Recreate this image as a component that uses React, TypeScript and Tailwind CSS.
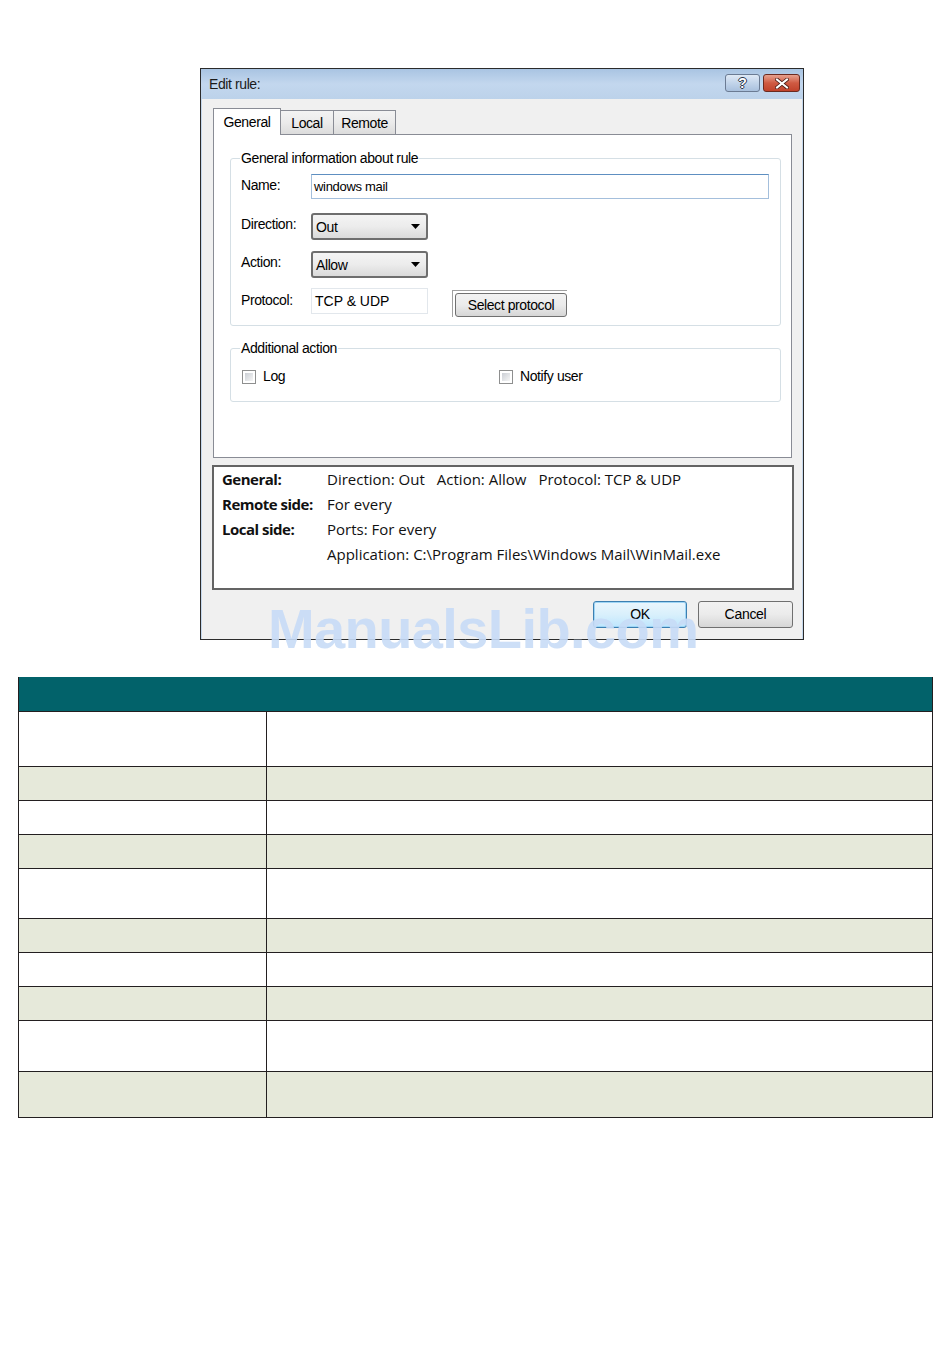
// Edit rule dialog (firewall rule editor) above an empty two-column table.

const ui = { fontFamily: '"Liberation Sans", Arial, sans-serif' };
const segoe = { fontFamily: '"Open Sans", "Liberation Sans", sans-serif' };

const rows: { h: number; shade: boolean }[] = [
  { h: 55, shade: false },
  { h: 34, shade: true },
  { h: 34, shade: false },
  { h: 34, shade: true },
  { h: 50, shade: false },
  { h: 34, shade: true },
  { h: 34, shade: false },
  { h: 34, shade: true },
  { h: 51, shade: false },
  { h: 46, shade: true },
];

export default function App() {
  return (
    <div className="min-h-[1369px] w-[950px] bg-white text-black" style={ui}>
      <div className="pt-[68px] pl-[200px]">
        <Dialog />
      </div>

      {/* empty table below the screenshot */}
      <div className="ml-[18px] mt-[37px] w-[915px] border-b border-l border-r border-[#231f20]">
        <div className="h-[34px] bg-[#02626a]" />
        {rows.map((r, i) => (
          <div
            key={i}
            className={`flex border-t border-[#231f20] ${r.shade ? 'bg-[#e6e9da]' : 'bg-white'}`}
            style={{ height: r.h }}
          >
            <div className="w-[248px] shrink-0 border-r border-[#231f20]" />
            <div className="flex-1" />
          </div>
        ))}
      </div>
    </div>
  );
}

function Dialog() {
  return (
    <div className="relative w-[604px] h-[572px] border border-[#2b2b2b] bg-[#c4d7ec]">
      {/* title bar */}
      <div className="flex h-[30px] items-center justify-between bg-gradient-to-b from-[#a9c4e2] via-[#c3d7ee] to-[#bcd2ea] pl-[8px] pr-[3px]">
        <span className="text-[14px] tracking-[-0.4px] text-[#1b1b1b]">Edit rule:</span>
        <div className="flex gap-[3px] self-start pt-[5px]">
          <div className="flex h-[18px] w-[35px] items-center justify-center rounded-[3px] border border-[#6b7b93] bg-gradient-to-b from-[#dfe9f5] via-[#c2d4ea] to-[#a9c0dd] text-[14px] font-bold leading-none text-white [text-shadow:1px_0_0_#2a3447,-1px_0_0_#2a3447,0_1px_0_#2a3447,0_-1px_0_#2a3447]">
            ?
          </div>
          <div className="flex h-[18px] w-[37px] items-center justify-center rounded-[3px] border border-[#6b2a20] bg-gradient-to-b from-[#e6a08e] via-[#cf5a42] to-[#c0422b]">
            <svg width="14" height="11" viewBox="0 0 14 11">
              <path d="M2 1.5 L12 9.5 M12 1.5 L2 9.5" stroke="#4a1d16" strokeWidth="3.6" strokeLinecap="square" />
              <path d="M2 1.5 L12 9.5 M12 1.5 L2 9.5" stroke="#ffffff" strokeWidth="2" strokeLinecap="square" />
            </svg>
          </div>
        </div>
      </div>

      {/* client area */}
      <div className="mx-[1px] h-[540px] bg-[#f0f0f0] pt-[9px]">
        {/* tabs */}
        <div className="ml-[11px] flex items-end">
          <div className="relative z-10 -mb-[1px] flex h-[27px] w-[68px] items-start justify-center border border-b-0 border-[#898c95] bg-white pt-[3px] text-[14px] tracking-[-0.4px]">
            General
          </div>
          <Tab label="Local" w={53} />
          <Tab label="Remote" w={62} />
        </div>

        {/* tab page */}
        <div className="ml-[11px] h-[324px] w-[579px] border border-[#898c95] bg-white pl-[16px] pr-[10px] pt-[15px] text-[14px] tracking-[-0.4px]">
          <fieldset className="h-[176px] rounded-[3px] border border-[#d5dfe5] pl-[10px] pr-[11px]">
            <legend className="ml-[-1px] px-[1px] leading-[16px]">General information about rule</legend>
            <div className="mt-[8px] flex h-[25px] items-start">
              <span className="w-[70px] pt-[1px]">Name:</span>
              <div className="h-[25px] flex-1 border border-[#a4bfdc] border-t-[#5e8fc1] pl-[2px] text-[13px] leading-[23px] tracking-[-0.3px]">
                windows mail
              </div>
            </div>
            <div className="mt-[14px] flex items-start">
              <span className="w-[70px] pt-[1px]">Direction:</span>
              <Combo value="Out" />
            </div>
            <div className="mt-[11px] flex items-start">
              <span className="w-[70px] pt-[1px]">Action:</span>
              <Combo value="Allow" />
            </div>
            <div className="mt-[10px] flex items-start">
              <span className="w-[70px] pt-[2px]">Protocol:</span>
              <div className="h-[26px] w-[117px] border border-[#e2e7ec] pl-[3px] leading-[24px] tracking-[0px]">TCP &amp; UDP</div>
              <div className="ml-[24px] mt-[2px] border-l border-t border-[#a0a0a0] pl-[2px] pt-[2px]">
                <div className="flex h-[24px] w-[112px] items-center justify-center rounded-[3px] border border-[#707070] bg-gradient-to-b from-[#f2f2f2] via-[#ebebeb] to-[#d6d6d6]">
                  Select protocol
                </div>
              </div>
            </div>
          </fieldset>

          <fieldset className="mt-[14px] h-[62px] rounded-[3px] border border-[#d5dfe5] pl-[11px]">
            <legend className="ml-[-2px] px-[1px] leading-[16px]">Additional action</legend>
            <div className="mt-[10px] flex items-center">
              <div className="flex w-[257px] items-center">
                <Check />
                <span className="ml-[7px]">Log</span>
              </div>
              <Check />
              <span className="ml-[7px]">Notify user</span>
            </div>
          </fieldset>
        </div>

        {/* summary */}
        <div className="ml-[10px] mt-[7px] h-[125px] w-[582px] border-2 border-[#646464] bg-white pl-[8px] text-[15px] leading-[25px] text-[#111]" style={segoe}>
          <div className="flex">
            <span className="w-[105px] font-bold tracking-[-0.5px]">General:</span>
            <span className="flex gap-[12px]">
              <span>Direction: Out</span>
              <span>Action: Allow</span>
              <span>Protocol: TCP &amp; UDP</span>
            </span>
          </div>
          <div className="flex">
            <span className="w-[105px] font-bold tracking-[-0.5px]">Remote side:</span>
            <span>For every</span>
          </div>
          <div className="flex">
            <span className="w-[105px] font-bold tracking-[-0.5px]">Local side:</span>
            <span>Ports: For every</span>
          </div>
          <div className="flex">
            <span className="w-[105px]" />
            <span>Application: C:\Program Files\Windows Mail\WinMail.exe</span>
          </div>
        </div>

        {/* buttons */}
        <div className="mr-[9px] mt-[11px] flex justify-end gap-[11px] text-[14px] tracking-[-0.3px]">
          <div className="flex h-[27px] w-[94px] items-center justify-center rounded-[3px] border border-[#3c7fb1] bg-gradient-to-b from-[#eaf6fd] via-[#d9f0fc] to-[#bee6fd] shadow-[inset_0_0_0_1px_#9ed5f5]">
            OK
          </div>
          <div className="flex h-[27px] w-[95px] items-center justify-center rounded-[3px] border border-[#707070] bg-gradient-to-b from-[#f2f2f2] via-[#ebebeb] to-[#d6d6d6]">
            Cancel
          </div>
        </div>
      </div>

      {/* watermark over the dialog's bottom edge */}
      <div
        className="pointer-events-none absolute left-[67px] top-[532px] whitespace-nowrap text-[56px] font-bold leading-none tracking-[-0.6px] text-[#c8dcf7] opacity-90"
        style={{ fontFamily: '"Liberation Sans", Arial, sans-serif' }}
      >
        ManualsLib.com
      </div>
    </div>
  );
}

function Tab({ label, w }: { label: string; w: number }) {
  return (
    <div
      className="flex h-[24px] items-center justify-center border border-b-0 border-l-0 border-[#898c95] bg-gradient-to-b from-[#f3f3f3] via-[#ebebeb] to-[#dcdcdc] pt-[1px] text-[14px] tracking-[-0.4px] first:border-l"
      style={{ width: w }}
    >
      {label}
    </div>
  );
}

function Combo({ value }: { value: string }) {
  return (
    <div className="flex h-[27px] w-[117px] items-center justify-between rounded-[3px] border-2 border-[#6e6e6e] bg-gradient-to-b from-[#f4f4f4] via-[#ececec] to-[#dadada] pl-[3px] pr-[6px]">
      <span className="pt-[2px]">{value}</span>
      <svg width="9" height="5" viewBox="0 0 9 5">
        <path d="M0 0 H9 L4.5 5 Z" fill="#000" />
      </svg>
    </div>
  );
}

function Check() {
  return (
    <div className="h-[14px] w-[14px] border border-[#8e8f8f] bg-white p-[2px]">
      <div className="h-full w-full bg-gradient-to-br from-[#cbcfd5] to-[#f6f6f6]" />
    </div>
  );
}
